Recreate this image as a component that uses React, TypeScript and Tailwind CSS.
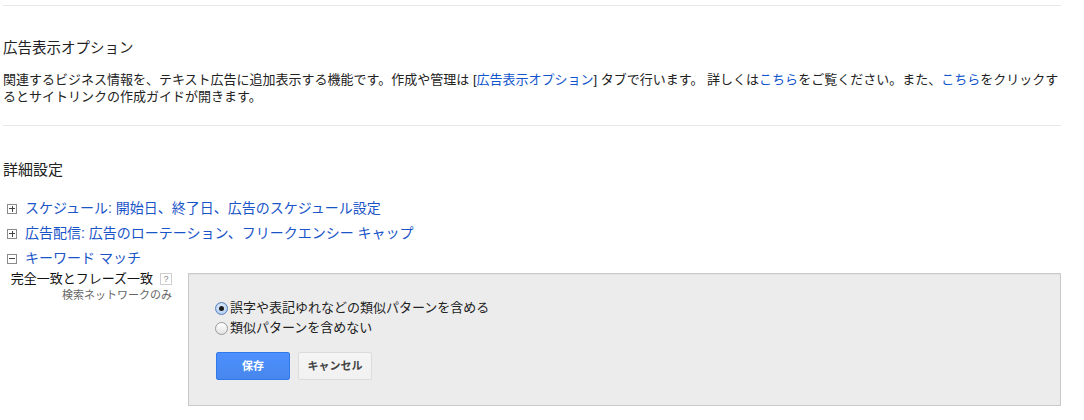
import React from "react";

const font = { fontFamily: '"Liberation Sans", "Noto Sans CJK JP", sans-serif' };

function Toggle({ open }: { open?: boolean }) {
  return (
    <span className="relative inline-block w-[10px] h-[10px] border border-[#8a8a8a] bg-white shrink-0">
      <span className="absolute left-[1px] right-[1px] top-[3.5px] h-[1px] bg-[#444]" />
      {!open && <span className="absolute top-[1px] bottom-[1px] left-[3.5px] w-[1px] bg-[#444]" />}
    </span>
  );
}

function Radio({ checked }: { checked?: boolean }) {
  return (
    <span
      className={
        "relative inline-flex items-center justify-center w-[13px] h-[13px] rounded-full border shrink-0 " +
        (checked
          ? "border-[#5a7fb8] bg-[radial-gradient(circle_at_50%_40%,#e9f2fd,#9ec3f2)]"
          : "border-[#9a9a9a] bg-[linear-gradient(#ffffff,#e3e3e3)]")
      }
    >
      {checked && <span className="w-[5px] h-[5px] rounded-full bg-[#1c1c1c]" />}
    </span>
  );
}

export default function App() {
  return (
    <div className="bg-white w-[1084px] h-[420px] text-[#222]" style={font}>
      <div className="ml-[3px] w-[1058px]">
        <div className="h-[5px]" />
        <div className="h-px bg-[#e8e8e8]" />
        <div className="mt-[32px] text-[14.5px] leading-[20px] text-[#222]">広告表示オプション</div>
        <div className="mt-[13px] text-[13px] leading-[17px] text-[#222]">
          関連するビジネス情報を、テキスト広告に追加表示する機能です。作成や管理は [<span className="text-[#1155cc]">広告表示オプション</span>] タブで行います。 詳しくは<span className="text-[#1155cc]">こちら</span>をご覧ください。また、<span className="text-[#1155cc]">こちら</span>をクリックするとサイトリンクの作成ガイドが開きます。
        </div>
        <div className="mt-[20px] h-px bg-[#e8e8e8]" />
        <div className="mt-[34px] text-[15px] leading-[20px]">詳細設定</div>
        <div className="mt-[16px]">
          <div className="flex items-center h-[25px] pl-[4px] gap-[8px] text-[14px] text-[#1a55c8]">
            <Toggle />
            <span>スケジュール: 開始日、終了日、広告のスケジュール設定</span>
          </div>
          <div className="flex items-center h-[25px] pl-[4px] gap-[8px] text-[14px] text-[#1a55c8]">
            <Toggle />
            <span>広告配信: 広告のローテーション、フリークエンシー キャップ</span>
          </div>
          <div className="flex items-center h-[25px] pl-[4px] gap-[8px] text-[14px] text-[#1a55c8]">
            <Toggle open />
            <span>キーワード マッチ</span>
          </div>
        </div>
        <div className="flex gap-[16px]">
          <div className="w-[169px] flex flex-col items-end">
            <div className="flex items-center h-[16px] gap-[7px]">
              <span className="text-[13px] leading-[16px] text-[#111]">完全一致とフレーズ一致</span>
              <span className="w-[12px] h-[12px] border border-[#cfcfcf] flex items-center justify-center text-[9px] leading-none text-[#888] bg-white">
                ?
              </span>
            </div>
            <div className="mt-[1px] text-[11px] leading-[14px] text-[#666]">検索ネットワークのみ</div>
          </div>
          <div className="mt-[2px] flex-1 h-[133px] border border-[#c9c9c9] bg-[#ececec] pt-[24px] pl-[26px] shadow-[inset_0_1px_1px_rgba(0,0,0,0.04)]">
            <div className="flex items-center h-[20px] gap-[2px] text-[13px]">
              <Radio checked />
              <span>誤字や表記ゆれなどの類似パターンを含める</span>
            </div>
            <div className="flex items-center h-[20px] gap-[2px] text-[13px]">
              <Radio />
              <span>類似パターンを含めない</span>
            </div>
            <div className="mt-[14px] ml-[1px] flex gap-[8px]">
              <button className="w-[74px] h-[28px] rounded-[2px] border border-[#3079ed] bg-[linear-gradient(#4d90fe,#4787ed)] text-white text-[11px] font-bold">
                保存
              </button>
              <button className="w-[74px] h-[28px] rounded-[2px] border border-[#dcdcdc] bg-[linear-gradient(#f5f5f5,#f1f1f1)] text-[#444] text-[11px] font-bold">
                キャンセル
              </button>
            </div>
          </div>
        </div>
      </div>
    </div>
  );
}
